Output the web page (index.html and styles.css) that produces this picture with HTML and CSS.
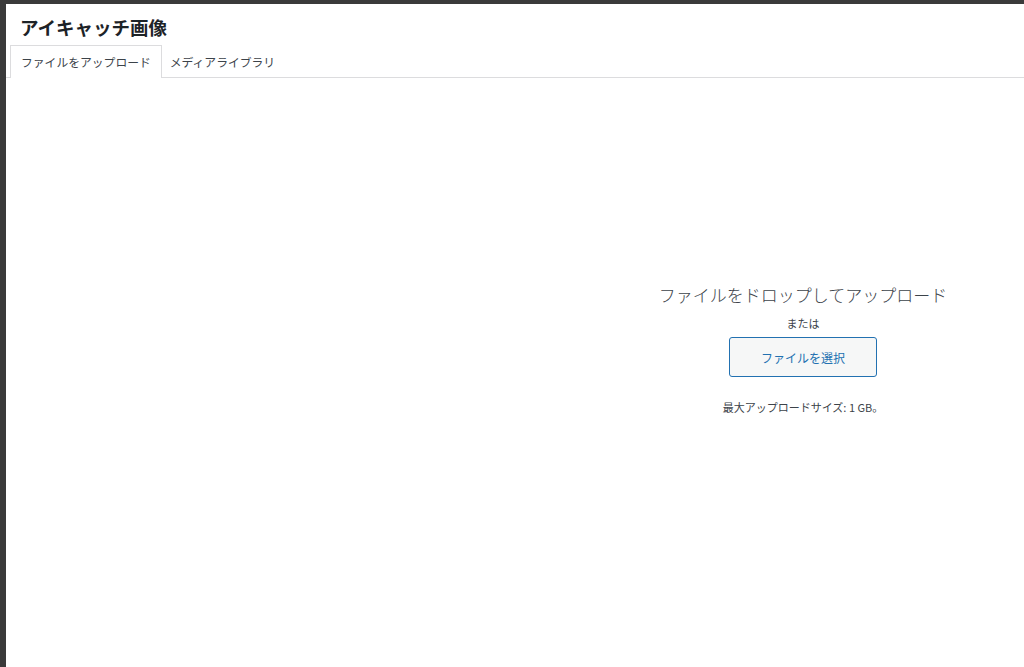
FILE: index.html
```html
<!DOCTYPE html>
<html>
<head>
  <title>アイキャッチ画像</title>
  <link rel="stylesheet" href="styles.css">
</head>
<body>
  <div class="modal">
    <h1 class="modal-title">アイキャッチ画像</h1>
    <div class="tabs">
      <span class="tab active">ファイルをアップロード</span>
      <span class="tab">メディアライブラリ</span>
    </div>
    <div class="frame-content">
      <div class="uploader">
        <p class="drop-text">ファイルをドロップしてアップロード</p>
        <p class="or-text">または</p>
        <button class="select-btn">ファイルを選択</button>
        <p class="max-size">最大アップロードサイズ: 1 GB。</p>
      </div>
    </div>
  </div>
</body>
</html>
```

FILE: styles.css
```css
html, body {
  margin: 0;
  height: 100%;
  overflow: hidden;
}

body {
  background-color: #3a3a3a;
  font-family: "Noto Sans CJK JP", "Noto Sans", sans-serif;
  color: #1d2327;
}

.modal {
  margin: 4px 0 0 6px;
  height: 663px;
  background-color: #fff;
  display: flex;
  flex-direction: column;
}

.modal-title {
  margin: 0;
  padding: 12px 0 0 14px;
  height: 29px;
  font-size: 18.5px;
  font-weight: bold;
  line-height: 22px;
  color: #1d2327;
}

.tabs {
  display: flex;
  padding-left: 4px;
  border-bottom: 1px solid #dcdcde;
}

.tab {
  display: block;
  padding: 0 10px;
  height: 31px;
  line-height: 31px;
  font-size: 11.8px;
  color: #3c434a;
  border: 1px solid transparent;
  border-bottom: none;
  margin-bottom: -1px;
}

.tab + .tab {
  padding-left: 7px;
}

.tab.active {
  background-color: #fff;
  border-color: #dcdcde;
  height: 32px;
}

.frame-content {
  flex: 1;
  display: flex;
  justify-content: flex-end;
}

.uploader {
  width: 442px;
  padding-top: 205px;
  text-align: center;
}

.drop-text {
  margin: 0;
  font-size: 17px;
  font-weight: 300;
  line-height: 24px;
  color: #3c434a;
}

.or-text {
  margin: 8px 0 0;
  font-size: 11px;
  line-height: 16px;
  color: #3c434a;
}

.select-btn {
  margin-top: 6px;
  width: 148px;
  height: 40px;
  border: 1px solid #2271b1;
  border-radius: 3px;
  background-color: #f6f7f7;
  color: #2271b1;
  font-family: "Noto Sans CJK JP", "Noto Sans", sans-serif;
  font-size: 12px;
}

.max-size {
  margin: 22px 0 0;
  font-size: 11px;
  line-height: 16px;
  color: #3c434a;
}
```
